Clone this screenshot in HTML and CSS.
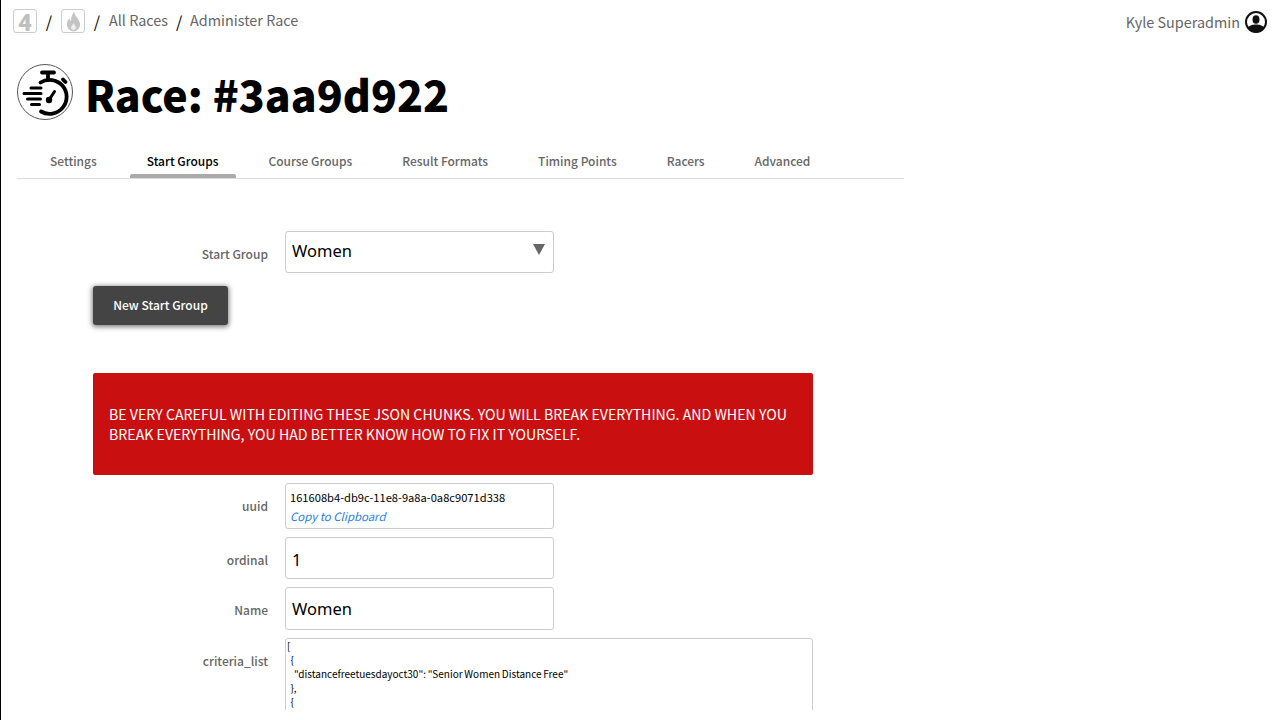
FILE: index.html
```html
<!DOCTYPE html>
<html lang="en">
<head>
<meta charset="utf-8">
<title>Race</title>
<link rel="stylesheet" href="styles.css">
</head>
<body>
<div class="page">
  <header class="topbar">
    <nav class="crumbs">
      <span class="tile"><span class="four">4</span></span>
      <span class="sep">/</span>
      <span class="tile">
        <svg class="flame" viewBox="0 0 16 22" width="15" height="21"><path d="M8.500 0.500c.6 3.400 2.300 5 3.900 7.200 1.500 2.100 2.600 4.100 2.600 6.300 0 4.200-3 7.500-7 7.500s-7-3.300-7-7.500c0-2.700 1.200-4.800 2.700-6.400.2 1.400.8 2.500 1.700 3.100C5.200 7.500 6.500 3.200 8.500.5z" fill="#c4c4c4"/><path d="M8 12.500c-.6 1.700-2.600 3-2.600 5.200 0 1.500 1.200 2.300 2.600 2.300s2.600-.8 2.600-2.300c0-2.200-2-3.500-2.600-5.200z" fill="#eee"/></svg>
      </span>
      <span class="sep">/</span>
      <a class="crumb">All Races</a>
      <span class="sep sep-tight">/</span>
      <a class="crumb">Administer Race</a>
    </nav>
    <div class="user">
      <span class="user-name">Kyle Superadmin</span>
      <svg viewBox="0 0 22 22" width="22" height="22"><circle cx="11" cy="11" r="10" fill="#fff" stroke="#111" stroke-width="2"/><ellipse cx="11" cy="8.500" rx="3.500" ry="4.300" fill="#111"/><path d="M2.800 17c1.400-3 5-3.600 8.200-3.600s6.800.6 8.200 3.600C17.500 19.800 14.500 21.500 11 21.500S4.500 19.800 2.800 17z" fill="#111"/></svg>
    </div>
  </header>

  <div class="title">
    <span class="badge">
      <svg viewBox="0 0 56 56" width="56" height="56">
        <circle cx="28" cy="28" r="27.500" fill="#fff" stroke="#555" stroke-width="1"/>
        <g fill="none" stroke="#000" stroke-width="3.800" stroke-linecap="round">
          <path d="M25 8.500h12M31 9v7"/>
          <path d="M23.500 18.500A17 17 0 1 1 24 47.500"/>
          <path d="M46 15.500l2.500 2.500"/>
          <path d="M14 24h10M7 29.500h17M10.500 35h13M14.500 40.500h8" stroke-width="3"/>
          <path d="M32 36l5.500-8.500" stroke-width="3"/>
        </g>
        <circle cx="32" cy="36" r="3.200" fill="#000"/>
      </svg>
    </span>
    <h1>Race: #3aa9d922</h1>
  </div>

  <nav class="tabs">
    <a class="tab"><span>Settings</span></a>
    <a class="tab active"><span>Start Groups</span></a>
    <a class="tab"><span>Course Groups</span></a>
    <a class="tab"><span>Result Formats</span></a>
    <a class="tab"><span>Timing Points</span></a>
    <a class="tab"><span>Racers</span></a>
    <a class="tab"><span>Advanced</span></a>
  </nav>

  <main class="content">
    <div class="row row-select">
      <label class="lab">Start Group</label>
      <div class="box select"><span>Women</span><i class="arrow"></i></div>
    </div>
    <button class="btn">New Start Group</button>

    <div class="alert">BE VERY CAREFUL WITH EDITING THESE JSON CHUNKS. YOU WILL BREAK EVERYTHING. AND WHEN YOU BREAK EVERYTHING, YOU HAD BETTER KNOW HOW TO FIX IT YOURSELF.</div>

    <div class="row row-uuid">
      <label class="lab">uuid</label>
      <div class="box uuid">
        <div class="uuid-val">161608b4-db9c-11e8-9a8a-0a8c9071d338</div>
        <a class="copy">Copy to Clipboard</a>
      </div>
    </div>
    <div class="row row-ord">
      <label class="lab">ordinal</label>
      <div class="box ord">1</div>
    </div>
    <div class="row row-name">
      <label class="lab">Name</label>
      <div class="box name">Women</div>
    </div>
    <div class="row row-crit">
      <label class="lab">criteria_list</label>
      <div class="box area"><div class="area-text">[
  {
    "distancefreetuesdayoct30": "Senior Women Distance Free"
  },
  {</div></div>
    </div>
  </main>
</div>
</body>
</html>
```

FILE: styles.css
```css
* { box-sizing: border-box; }
html, body { margin: 0; padding: 0; height: 720px; overflow: hidden; background: #fff; }
body {
  border-left: 1px solid #000;
  font-family: "Noto Sans CJK JP", "Noto Sans", sans-serif;
  color: #666;
}
.page { height: 710px; overflow: hidden; }

.topbar { display: flex; justify-content: space-between; align-items: flex-start; height: 45px; padding: 9px 13px 0 12px; }
.crumbs { display: flex; align-items: center; height: 24px; font-size: 14.400px; }
.tile { width: 24px; height: 24px; border: 1px solid #ccc; border-radius: 3px; display: flex; align-items: center; justify-content: center; }
.four { font-family: Roboto, sans-serif; font-size: 24px; font-weight: 900; color: #bfbfbf; line-height: 22px; padding-top: 3px; }
.sep { color: #000; width: 24px; text-align: center; font-size: 16px; }
.sep-tight { width: 22px; }
.crumb { color: #666; margin-bottom: 4px; }
.user { display: flex; align-items: center; gap: 5px; font-size: 14.400px; height: 26px; color: #666; }
.user-name { margin-bottom: 2px; }

.title { display: flex; align-items: center; margin: 15px 0 0 16px; height: 64px; gap: 12px; }
.badge { width: 56px; height: 56px; display: block; }
h1 { margin: 0; padding-top: 2px; font-size: 42.800px; line-height: 62px; font-weight: 900; color: #000; }

.tabs { display: flex; width: 887px; height: 34px; margin: 21px 0 0 16px; padding-left: 16px; gap: 16px; border-bottom: 1px solid #ddd; }
.tab { display: flex; flex-direction: column; justify-content: space-between; font-size: 11.970px; font-weight: 500; color: #666; padding: 0 17px; height: 33px; line-height: 32px; }
.tab span { display: block; height: 29px; }
.tab.active { color: #000; }
.tab.active::after { content: ""; display: block; height: 4px; margin: 0 -17px; background: #aaa; border-radius: 2px 2px 0 0; }

.content { width: 720px; margin-left: 92px; padding-top: 52px; }
.row { display: flex; }
.lab { width: 192px; padding-right: 17px; text-align: right; font-size: 12px; line-height: 18px; font-weight: 500; color: #666; }
.box { width: 269px; border: 1px solid #ccc; border-radius: 3px; background: #fff; color: #000; font-family: "Noto Sans", sans-serif; }

.row-select { height: 42px; }
.row-select .lab { padding-top: 14px; }
.select { height: 42px; font-size: 16.500px; line-height: 37px; padding-left: 6px; position: relative; }
.arrow { position: absolute; top: 12px; right: 8px; border-left: 6px solid transparent; border-right: 6px solid transparent; border-top: 11px solid #666; }

.btn { display: block; margin-top: 13px; padding: 0 0 2px; width: 135px; height: 39px; background: #444; border: 0; border-radius: 3px; box-shadow: 0 1px 5px 1px rgba(0,0,0,.5); color: #fff; font-family: inherit; font-size: 12px; font-weight: 500; }

.alert { margin-top: 48px; height: 102px; padding: 31px 16px 0; background: #c90f0f; border-radius: 2px; color: #fff; font-size: 14.160px; line-height: 20px; }

.row-uuid { margin-top: 8px; height: 46px; }
.row-uuid .lab { padding-top: 14px; }
.uuid { height: 46px; padding: 3px 4px; font-size: 11.150px; }
.uuid-val { font-family: "Noto Sans CJK JP", sans-serif; line-height: 20px; }
.copy { display: block; font-family: "Noto Sans CJK JP", sans-serif; font-style: italic; font-size: 11.400px; line-height: 18px; color: #2b7fe0; }

.row-ord { margin-top: 8px; height: 42px; }
.row-ord .lab { padding-top: 14px; }
.ord { height: 42px; font-size: 16.500px; line-height: 44px; padding-left: 6px; }

.row-name { margin-top: 8px; height: 43px; }
.row-name .lab { padding-top: 14px; }
.name { height: 43px; font-size: 16.500px; line-height: 42px; padding-left: 6px; }

.row-crit { margin-top: 8px; }
.row-crit .lab { padding-top: 14px; }
.area { width: 528px; height: 160px; overflow: hidden; font-family: "Noto Sans CJK JP", sans-serif; font-size: 10px; line-height: 14px; }
.area-text { white-space: pre; padding-left: 1px; word-spacing: -.5px; }
```
